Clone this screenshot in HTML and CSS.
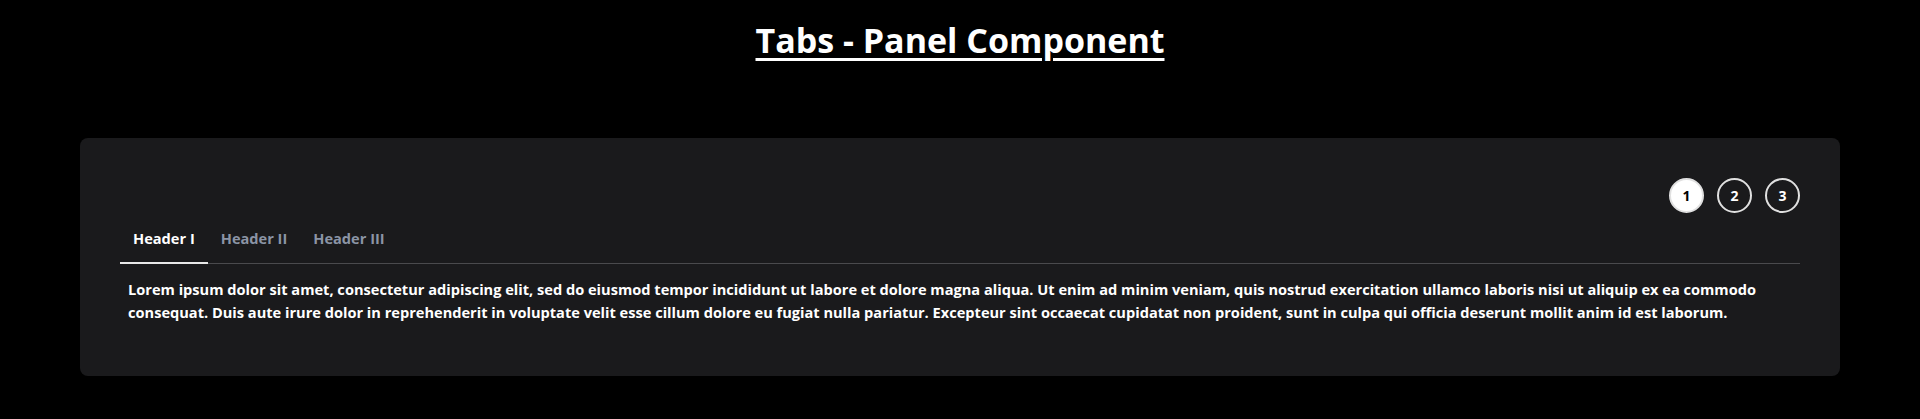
FILE: index.html
```html
<!DOCTYPE html>
<html lang="en">
<head>
    <meta charset="UTF-8">
    <meta name="viewport" content="width=device-width, initial-scale=1.0">
    <title>Tabs - Panel Component</title>
    <link rel="stylesheet" href="styles.css">
</head>
<body>
    <h1 class="page-title">Tabs - Panel Component</h1>
    <div class="panel">
        <div class="steps">
            <span class="step active">1</span>
            <span class="step">2</span>
            <span class="step">3</span>
        </div>
        <div class="tabs">
            <span class="tab active">Header I</span>
            <span class="tab">Header II</span>
            <span class="tab">Header III</span>
        </div>
        <p class="tab-content">Lorem ipsum dolor sit amet, consectetur adipiscing elit, sed do eiusmod tempor incididunt ut labore et dolore magna aliqua. Ut enim ad minim veniam, quis nostrud exercitation ullamco laboris nisi ut aliquip ex ea commodo consequat. Duis aute irure dolor in reprehenderit in voluptate velit esse cillum dolore eu fugiat nulla pariatur. Excepteur sint occaecat cupidatat non proident, sunt in culpa qui officia deserunt mollit anim id est laborum.</p>
    </div>
</body>
</html>
```

FILE: styles.css
```css
body {
    margin: 0;
    background-color: #000;
    color: #fff;
    font-family: "Open Sans", "Noto Sans", sans-serif;
    font-weight: bold;
}
.page-title {
    margin: 17px 0 0;
    text-align: center;
    font-size: 34px;
    line-height: 46px;
    text-decoration: underline;
    text-underline-offset: 5px;
    text-decoration-thickness: 3px;
}
.panel {
    margin: 75px 80px 0;
    padding: 40px 40px 40px;
    background-color: #1a1a1c;
    border-radius: 8px;
}
.steps {
    display: flex;
    justify-content: flex-end;
    gap: 13px;
}
.step {
    width: 31px;
    height: 31px;
    border: 2px solid #e0e0e0;
    border-radius: 50%;
    display: flex;
    align-items: center;
    justify-content: center;
    font-size: 14px;
}
.step.active {
    background-color: #fff;
    color: #000;
}
.tabs {
    display: flex;
    margin-top: 5px;
    border-bottom: 1px solid #4a4a4d;
}
.tab {
    padding: 11px 13px 15px;
    font-size: 14.6px;
    line-height: 18px;
    color: #8b94a5;
    margin-bottom: -1px;
    border-bottom: 2px solid transparent;
}
.tab.active {
    color: #fff;
    border-bottom-color: #e8e8e8;
}
.tab-content {
    margin: 0;
    padding: 14px 8px 12px;
    font-size: 14.6px;
    line-height: 23px;
}
```
